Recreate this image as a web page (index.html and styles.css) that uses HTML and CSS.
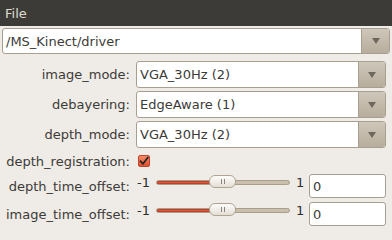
FILE: index.html
```html
<!DOCTYPE html>
<html>
<head>
<meta charset="utf-8">
<link rel="stylesheet" href="styles.css">
</head>
<body>
<div class="menubar"><span class="menu-item">File</span></div>
<div class="combo combo-top">
  <div class="combo-text">/MS_Kinect/driver</div>
  <div class="combo-btn"><span class="tri"></span></div>
</div>
<div class="form">
  <div class="label">image_mode:</div>
  <div class="combo">
    <div class="combo-text">VGA_30Hz (2)</div>
    <div class="combo-btn"><span class="tri"></span></div>
  </div>

  <div class="label">debayering:</div>
  <div class="combo">
    <div class="combo-text">EdgeAware (1)</div>
    <div class="combo-btn"><span class="tri"></span></div>
  </div>

  <div class="label">depth_mode:</div>
  <div class="combo">
    <div class="combo-text">VGA_30Hz (2)</div>
    <div class="combo-btn"><span class="tri"></span></div>
  </div>

  <div class="label">depth_registration:</div>
  <div class="check-cell">
    <span class="checkbox">
      <svg width="10" height="10" viewBox="0 0 10 10"><path d="M1.5 5.2 L4 7.8 L8.8 1.5" fill="none" stroke="#2a2522" stroke-width="1.8" stroke-linecap="round" stroke-linejoin="round"/></svg>
    </span>
  </div>

  <div class="label">depth_time_offset:</div>
  <div class="slider-cell">
    <span class="tick">-1</span>
    <div class="slider">
      <div class="track"><div class="fill" style="width:55px"></div></div>
      <div class="thumb" style="left:53px"><span class="grip"></span><span class="grip"></span></div>
    </div>
    <span class="tick tick-max">1</span>
    <div class="field">0</div>
  </div>

  <div class="label">image_time_offset:</div>
  <div class="slider-cell">
    <span class="tick">-1</span>
    <div class="slider">
      <div class="track"><div class="fill" style="width:55px"></div></div>
      <div class="thumb" style="left:53px"><span class="grip"></span><span class="grip"></span></div>
    </div>
    <span class="tick tick-max">1</span>
    <div class="field">0</div>
  </div>
</div>
</body>
</html>
```
FILE: styles.css
```css
html, body {
  margin: 0;
  padding: 0;
}
body {
  width: 392px;
  height: 232px;
  overflow: hidden;
  background: #efebe7;
  font-family: "DejaVu Sans", sans-serif;
  font-size: 13px;
  color: #3c3b37;
}
.menubar {
  height: 26px;
  background: #3c3b37;
  display: flex;
  align-items: center;
  padding-left: 5px;
}
.menu-item {
  color: #dfdbd2;
  font-size: 13px;
}
.combo {
  display: flex;
  height: 27px;
  box-sizing: border-box;
  border: 1px solid #a89f90;
  border-radius: 3px;
  background: #ffffff;
  overflow: hidden;
}
.combo-top {
  margin: 2px 2px 0 2px;
  height: 26px;
}
.combo-text {
  flex: 1;
  display: flex;
  align-items: center;
  padding-left: 3px;
  color: #3c3b37;
  white-space: nowrap;
}
.combo-btn {
  width: 26px;
  border-left: 1px solid #a89f90;
  background: linear-gradient(#cfc7ba, #b7ad9c);
  display: flex;
  align-items: center;
  justify-content: center;
}
.combo-top .combo-btn {
  width: 27px;
}
.tri {
  width: 0;
  height: 0;
  border-left: 4px solid transparent;
  border-right: 4px solid transparent;
  border-top: 6px solid #6e675b;
}
.form {
  display: grid;
  grid-template-columns: 130px 250px;
  grid-template-rows: 27px 27px 27px 20px 25px 24px;
  column-gap: 6px;
  row-gap: 3px;
  margin-top: 7px;
}
.label {
  text-align: right;
  align-self: center;
  color: #3c3b37;
  white-space: nowrap;
}
.check-cell {
  display: flex;
  align-items: center;
  padding-left: 2px;
}
.checkbox {
  width: 12px;
  height: 12px;
  box-sizing: border-box;
  border: 1px solid #c0442a;
  border-radius: 2px;
  background: linear-gradient(#f58a68, #e0502f);
  display: flex;
  align-items: center;
  justify-content: center;
}
.checkbox svg {
  display: block;
}
.slider-cell {
  display: flex;
  align-items: flex-start;
  height: 24px;
}
.tick {
  padding-top: 1px;
  line-height: 15px;
  padding-left: 1px;
  width: 13px;
  color: #2e2e2e;
}
.tick-max {
  width: 8px;
  padding-left: 6px;
  margin-right: 5px;
}
.slider {
  position: relative;
  width: 134px;
  height: 24px;
  margin-left: 6px;
}
.track {
  position: absolute;
  left: 0;
  right: 0;
  top: 6px;
  height: 5px;
  box-sizing: border-box;
  border: 1px solid #a99e8a;
  border-radius: 3px;
  background: #c9bfac;
  overflow: hidden;
}
.fill {
  height: 100%;
  background: #e4553a;
  box-shadow: inset 0 0 0 1px #b9432c;
}
.thumb {
  position: absolute;
  top: 1px;
  width: 27px;
  height: 13px;
  box-sizing: border-box;
  border: 1px solid #aea491;
  border-radius: 6px;
  background: linear-gradient(#fdfcfb, #e4dfd6);
  display: flex;
  align-items: center;
  justify-content: center;
  gap: 2px;
}
.grip {
  width: 1px;
  height: 5px;
  background: #8c8476;
}
.field {
  width: 77px;
  height: 24px;
  box-sizing: border-box;
  border: 1px solid #a89f90;
  border-radius: 3px;
  background: #ffffff;
  padding-left: 3px;
  display: flex;
  align-items: center;
  color: #3c3b37;
}
```
